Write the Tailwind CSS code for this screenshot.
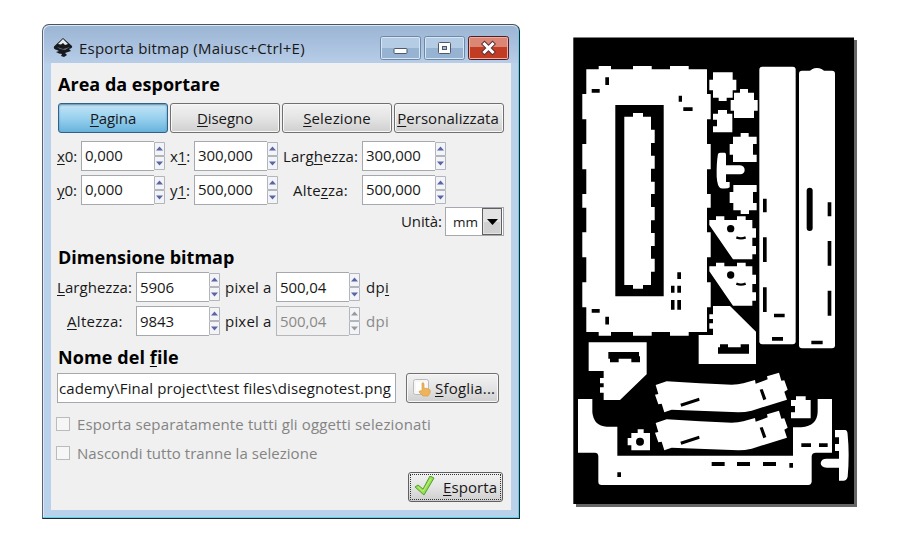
<!DOCTYPE html>
<html lang="it">
<head>
<meta charset="utf-8">
<title>Esporta bitmap</title>
<script src="https://cdn.jsdelivr.net/npm/@tailwindcss/browser@4"></script>
</head>
<body class="bg-white w-[900px] h-[550px] overflow-hidden">
<svg class="hidden">
  <symbol id="spin" viewBox="0 0 11 28"><path d="M.5.5h10v13H.5zM.5 14.5h10v13H.5z" fill="#f3f4f8" stroke="#b3b5bc"/><path d="M5.5 4.5L9 8.500H2zM2 19.500h7L5.500 23.500z" fill="currentColor"/></symbol>
</svg>
<main class="flex gap-[53px] pl-[42px] pt-6 items-start font-['Open_Sans','Noto_Sans',sans-serif] text-[15px] leading-5 tracking-[-0.1px] text-[#181818] whitespace-nowrap">
  <section class="w-[478px] h-[495px] rounded-t-[7px] border border-[#20272d] border-t-[#4c535c] border-l-[#5a6270] bg-[#b9d1ea] flex flex-col shadow-[inset_-1px_-1px_0_#55d5ec,inset_1px_1px_0_#dce8f5]">
    <header class="h-[37px] shrink-0 mx-px mt-px rounded-t-[6px] bg-linear-to-b from-[#9bb5d4] to-[#b7cde8] flex items-start pl-[9px]">
      <svg class="mt-[11px] w-5 h-[21px]" viewBox="0 0 20 21"><path d="M10 1L1 9.500Q0 12 4 13L6 14 3 15Q6 17 9 17L8 19 11 20 14 18 12 16 18 14 16 12Q20 11 19 9z" fill="#17191d"/><path d="M10 2L5 7 8 7.500 10 6 12 8 15 7z" fill="#e9edf2"/><path d="M4 10l6 2 7-2-5 3-5-1z" fill="#687482"/></svg>
      <h1 class="ml-[6px] mt-[12px] w-[301px] shrink-0 tracking-[0.22px]">Esporta bitmap (Maiusc+Ctrl+E)</h1>
      <div class="mt-[10px] flex gap-[3px]">
        <svg class="w-[41px] h-[24px]" viewBox="0 0 41 24"><rect x=".5" y=".5" width="40" height="23" rx="2" fill="#b5cce5" stroke="#6f87a6"/><path d="M2 12h37v10H2z" fill="#96b3d2"/><rect x="1.500" y="1.500" width="38" height="21" rx="1" fill="none" stroke="#d8e6f5"/><rect x="14" y="12.500" width="13" height="5" rx="1" fill="#fff" stroke="#4d5968"/></svg>
        <svg class="w-[41px] h-[24px]" viewBox="0 0 41 24"><rect x=".5" y=".5" width="40" height="23" rx="2" fill="#b5cce5" stroke="#6f87a6"/><path d="M2 12h37v10H2z" fill="#96b3d2"/><rect x="1.500" y="1.500" width="38" height="21" rx="1" fill="none" stroke="#d8e6f5"/><rect x="14.500" y="6.500" width="12" height="11" rx="1" fill="#fff" stroke="#4d5968"/><rect x="18.500" y="10.500" width="4" height="3" fill="#a7bed6" stroke="#4d5968"/></svg>
        <svg class="w-[41px] h-[24px]" viewBox="0 0 41 24"><rect x=".5" y=".5" width="40" height="23" rx="2" fill="#dc8676" stroke="#501d22"/><path d="M2 11h37v11H2z" fill="#c23c24"/><rect x="1.500" y="1.500" width="38" height="21" rx="1" fill="none" stroke="#edb0a5"/><path d="M16.500 8l8 8M24.500 8l-8 8" stroke="#5c3439" stroke-width="5" stroke-linecap="square"/><path d="M16.500 8l8 8M24.500 8l-8 8" stroke="#fff" stroke-width="3" stroke-linecap="square"/></svg>
      </div>
    </header>
    <div class="w-[460px] h-[447px] ml-[8px] bg-[#f0f0f0] pl-[6px] flex flex-col items-start">
      <h2 class="mt-[11px] h-[29px] text-[18px] font-bold text-black tracking-[0.02px] pl-px">Area da esportare</h2>
      <div class="flex ml-px gap-[2px] h-[30px] text-center leading-[29px]">
        <button class="w-[110px] rounded-[3px] border border-[#2c628b] bg-linear-to-b from-[#c4e5f6] via-[#98d1ef] to-[#68b3db] shadow-[inset_0_1px_2px_#5f8ba5]"><u class="underline-offset-2">P</u>agina</button>
        <button class="w-[110px] rounded-[3px] border border-[#707070] bg-linear-to-b from-[#f2f2f2] via-[#e4e4e4] to-[#cfcfcf] shadow-[inset_0_0_0_1px_#f8f8f8]"><u class="underline-offset-2">D</u>isegno</button>
        <button class="w-[110px] rounded-[3px] border border-[#707070] bg-linear-to-b from-[#f2f2f2] via-[#e4e4e4] to-[#cfcfcf] shadow-[inset_0_0_0_1px_#f8f8f8] tracking-[0.15px]"><u class="underline-offset-2">S</u>elezione</button>
        <button class="w-[110px] rounded-[3px] border border-[#707070] bg-linear-to-b from-[#f2f2f2] via-[#e4e4e4] to-[#cfcfcf] shadow-[inset_0_0_0_1px_#f8f8f8] pr-[2px] tracking-[0.05px]"><u class="underline-offset-2">P</u>ersonalizzata</button>
      </div>
      <div class="flex mt-[8px] h-[30px] items-center">
        <span class="w-6"><u class="underline-offset-2">x</u>0:</span>
        <span class="w-[73px] h-[30px] bg-white border border-r-0 border-[#a5a8ad] pl-[3px] leading-[27px]">0,000</span><svg class="w-[11px] h-7 text-[#5b64a4]"><use href="#spin"/></svg>
        <span class="ml-[5px] w-6">x<u class="underline-offset-2">1</u>:</span>
        <span class="w-[73px] h-[30px] bg-white border border-r-0 border-[#a5a8ad] pl-[3px] leading-[27px]">300,000</span><svg class="w-[11px] h-7 text-[#5b64a4]"><use href="#spin"/></svg>
        <span class="ml-[5px] w-[79px] tracking-[0.05px]">Larg<u class="underline-offset-2">h</u>ezza:</span>
        <span class="w-[73px] h-[30px] bg-white border border-r-0 border-[#a5a8ad] pl-[3px] leading-[27px]">300,000</span><svg class="w-[11px] h-7 text-[#5b64a4]"><use href="#spin"/></svg>
      </div>
      <div class="flex mt-1 h-[30px] items-center">
        <span class="w-6"><u class="underline-offset-2">y</u>0:</span>
        <span class="w-[73px] h-[30px] bg-white border border-r-0 border-[#a5a8ad] pl-[3px] leading-[27px]">0,000</span><svg class="w-[11px] h-7 text-[#5b64a4]"><use href="#spin"/></svg>
        <span class="ml-[5px] w-6">y<u class="underline-offset-2">1</u>:</span>
        <span class="w-[73px] h-[30px] bg-white border border-r-0 border-[#a5a8ad] pl-[3px] leading-[27px]">500,000</span><svg class="w-[11px] h-7 text-[#5b64a4]"><use href="#spin"/></svg>
        <span class="ml-[5px] w-[79px] pl-[10px] tracking-[0.2px]">Alte<u class="underline-offset-2">z</u>za:</span>
        <span class="w-[73px] h-[30px] bg-white border border-r-0 border-[#a5a8ad] pl-[3px] leading-[27px]">500,000</span><svg class="w-[11px] h-7 text-[#5b64a4]"><use href="#spin"/></svg>
      </div>
      <div class="flex mt-[2px] ml-[344px] h-[29px] items-center">
        <span class="w-[44px] pb-[2px]">Unità:</span>
        <span class="w-[59px] h-[29px] bg-white border border-[#a5a8ad] flex"><span class="w-[36px] pl-[7px] pt-[4px] text-[13.5px]">mm</span><svg class="w-[21px] h-[27px]" viewBox="0 0 21 27"><rect x=".5" y=".5" width="19" height="26" fill="#e3e3e3" stroke="#606060"/><path d="M2 14h16v11H2z" fill="#d0d0d0"/><path d="M5 11h11l-5.500 6z" fill="#000"/></svg></span>
      </div>
      <h2 class="mt-[11px] h-[25px] text-[18px] font-bold text-black tracking-[0px] pl-px">Dimensione bitmap</h2>
      <div class="flex h-[30px] items-center">
        <span class="w-[79px] tracking-[0.05px]"><u class="underline-offset-2">L</u>arghezza:</span>
        <span class="w-[73px] h-[30px] bg-white border border-r-0 border-[#a5a8ad] pl-[3px] leading-[28px]">5906</span><svg class="w-[11px] h-7 text-[#5b64a4]"><use href="#spin"/></svg>
        <span class="ml-[5px] w-[51px] tracking-[0.2px]">pixel a</span>
        <span class="w-[73px] h-[30px] bg-white border border-r-0 border-[#a5a8ad] pl-[3px] leading-[28px]">500,04</span><svg class="w-[11px] h-7 text-[#5b64a4]"><use href="#spin"/></svg>
        <span class="ml-[6px] tracking-[0.3px]">dp<u class="underline-offset-2">i</u></span>
      </div>
      <div class="flex mt-1 h-[30px] items-center">
        <span class="w-[79px] pl-[10px] tracking-[0.3px]"><u class="underline-offset-2">A</u>ltezza:</span>
        <span class="w-[73px] h-[30px] bg-white border border-r-0 border-[#a5a8ad] pl-[3px] leading-[28px]">9843</span><svg class="w-[11px] h-7 text-[#5b64a4]"><use href="#spin"/></svg>
        <span class="ml-[5px] w-[51px] tracking-[0.2px]">pixel a</span>
        <span class="w-[73px] h-[30px] border border-r-0 border-[#b5b7ba] text-[#8a8a8a] pl-[3px] leading-[28px]">500,04</span><svg class="w-[11px] h-7 text-[#999]"><use href="#spin"/></svg>
        <span class="ml-[6px] text-[#8a8a8a] tracking-[0.3px]">dpi</span>
      </div>
      <h2 class="mt-[11px] h-[26px] text-[18px] font-bold text-black tracking-[0.1px] pl-px">Nome del <u class="underline-offset-2">f</u>ile</h2>
      <div class="flex h-[30px]">
        <span class="w-[339px] h-[30px] bg-white border border-[#a5a8ad] pl-px leading-[29px] tracking-[0.11px] overflow-hidden">cademy\Final project\test files\disegnotest.png</span>
        <button class="ml-[10px] w-[93px] h-[30px] rounded-[3px] border border-[#707070] bg-linear-to-b from-[#f2f2f2] via-[#e4e4e4] to-[#cfcfcf] shadow-[inset_0_0_0_1px_#f8f8f8] flex items-center pl-[6px]">
          <svg class="w-[19px] h-[20px]" viewBox="0 0 19 20"><rect x=".5" y="1.500" width="15" height="15" rx="2" fill="#f6f6f4" stroke="#b9bbc0"/><path d="M3 4h10v9H3z" fill="#fff"/><path d="M9 5q2-1 2 1v4l5 1q2 1 1 4l-2 3h-5l-4-4q0-2 3-1z" fill="#eeb45a" stroke="#d99c4d" stroke-width=".7"/></svg>
          <span class="ml-[3px] tracking-[0.2px]"><u class="underline-offset-2">S</u>foglia...</span>
        </button>
      </div>
      <label class="mt-[11px] h-5 flex items-center text-[#848484] ml-[-1px] tracking-[0.14px]"><span class="w-[14px] h-[14px] mb-px mr-[7px] border border-[#b9bbbd] bg-[#f6f6f6]"></span>Esporta separatamente tutti gli oggetti selezionati</label>
      <label class="mt-[9px] h-5 flex items-center text-[#848484] ml-[-1px] tracking-[0.04px]"><span class="w-[14px] h-[14px] mb-px mr-[7px] border border-[#b9bbbd] bg-[#f6f6f6]"></span>Nascondi tutto tranne la selezione</label>
      <button class="ml-[351px] mt-[9px] w-[95px] h-[30px] rounded-[3px] border border-[#606060] bg-linear-to-b from-[#f2f2f2] via-[#e4e4e4] to-[#cfcfcf] p-px">
        <span class="h-full border border-dotted border-[#333] flex items-center pl-[4px]">
          <svg class="w-5 h-5 -mt-[3px]" viewBox="0 0 20 20"><path d="M0 11l3-2 5 4L15 0l4 2L9 19z" fill="#94df50" stroke="#57a02b"/><path d="M3 11l5 4.500L16 2.500" fill="none" stroke="#c2f184"/></svg>
          <span class="ml-[8px] tracking-[0.1px]"><u class="underline-offset-2">E</u>sporta</span>
        </span>
      </button>
    </div>
  </section>
  <svg class="w-[284px] h-[470px] mt-[13px]" viewBox="573 37 284 470" fill="#fff">
    <path d="M576 40h281v467H576z" fill="#666"/><path d="M573.300 37.500H854V504H573.300z" fill="#000"/>
    <!-- frame -->
    <path d="M586.300 69.300H598.700V66H611V69.300H633V66H651.700V69.300H670V66H688.700V69.300H707V94H710.700V119.300H707V144H710.700V169.300H707V194H710.700V207.700H707V232.300H710.700V257.300H707V282.300H710.700V307.300H707V332H688.700V335.700H670V332H651.700V335.700H633V332H611V335.700H598.700V332H586.300V307.300H582.300V282.300H586.300V257.300H582.300V232.300H586.300V207.700H582.300V194H586.300V169.300H582.300V144H586.300V119.300H582.300V94H586.300z"/>
    <path d="M615.300 105H663.700V296.300H615.300z" fill="#000"/>
    <path d="M624.300 116.700H633V113H643V116.700H651V129.700H654.700V143H651V155.700H654.700V168.700H651V181.700H654.700V194H651V207H654.700V220.300H651V233H654.700V246H651V258.700H654.700V271.700H651V285H643V288.700H633V285H624.300z"/>
    <path fill="#000" d="M605.300 77.300h3.700v7.700h-3.700zM591.700 89h8v3.700h-8zM678.700 95.700h3.300v6h-3.300zM683.300 107.300h9.300v3.700h-9.300zM677.300 272.300h3.700v6.700h-3.700zM671 285.700h3.500v7h-3.500zM677.300 285.700h3.700v7h-3.700zM671 300h3.500v9.700h-3.500zM677.300 300h3.700v9.700h-3.700zM591.700 309h8v3.700h-8zM605.300 316.700h3.700v7.700h-3.700z"/>
    <!-- connectors -->
    <g transform="translate(700 30) scale(.33333)">
      <path d="M39 127H98V149H109V181H98V203H80V213H56V203H39V181H28V149H39zM102 188H120V177H144V188H162V210H173V242H162V264H102V242H92V210H102zM39 251H54V240H81V251H97V307H39V289H51V269H39zM99 320H122V309H146V320H170V342H159V374H170V396H99V374H89V342H99z"/>
      <path d="M54 372Q56 368 62 368H74Q78 368 78 374V406H120Q134 408 134 420Q134 432 120 433H78V456H89V472Q84 477 62 475Q52 470 50 440Q49 400 54 372z"/>
    </g>
    <!-- rails and brackets -->
    <g transform="translate(700 185) scale(.33333)">
      <path d="M100 0H170V21H159V54H170V76H147V87H122V76H100V54H89V21H100z"/>
      <rect x="178" y="-355" width="109" height="833" rx="9"/><rect x="297" y="-343" width="108" height="833" rx="9"/><path d="M322 -340Q332 -341 336 -347Q350 -355 366 -347Q370 -341 380 -340z"/>
      <path fill="#000" d="M189 41h11v41h-11zM189 157h11v74h-11zM189 307h11v74h-11zM383 52h11v42h-11zM383 168h11v74h-11zM383 317h11v75h-11zM222 386h32v11h-32zM216 456h33v11h-33zM334 467h34v11h-34z"/><rect x="320" y="8" width="18" height="130" rx="9" fill="#000"/>
      <g id="bracket"><path d="M28 105H48V94H73V105H111V94H137V105H157V130H168V158H157V183H168V208H157V223H99L28 120z"/><circle cx="92" cy="131" r="11" fill="#000"/><path d="M109 157q14 6 28 0" fill="none" stroke="#000" stroke-width="7"/></g>
      <use href="#bracket" y="139"/>
      <path d="M39 363H90L168 440V537H-4V450H39V431H28V415H39V402H28V388H39z"/><path fill="#000" d="M60 478H84V487H122V478H147V506H54V487H60z"/>
    </g>
    <!-- base, arms and hook -->
    <g transform="translate(565 335) scale(.33333)">
      <path d="M71 22H245V118L165 195H116V173H105V157H116V145H105V129H116V108H71z"/><path fill="#000" d="M130 51H222V64H225V82H199V71H161V82H135V71H130z"/>
      <g id="arm"><path d="M272 150L305 139L405 144.500L500 149Q520 149 535 145L570 135L572 146L608 133L606 124L642 113L649 137L658 136L668 164L658 170L666 194L560 227Q540 232 520 232L320 224L298 232L290 206L280 208L270 179L280 177z"/><path fill="#000" d="M346 206L402 188L404 197L349 215zM584 164L593 162L604 192L595 196z"/></g>
      <use href="#arm" y="114"/>
      <path d="M39 192H82V232Q86 273 125 275H157V362H684V277H709Q757 272 758 230V192H801V353H753Q740 353 740 365V440Q738 450 730 450H110Q100 450 100 440V365Q100 353 90 353H39z"/>
      <path fill="#000" d="M157 412h11v14h-11zM440 381h39v12h-39zM516 381h39v12h-39zM594 381h39v12h-39zM673 384h11v14h-11zM709 325h29v11h-29zM762 325h26v11h-26z"/>
      <path d="M199 294H218V283H236V294H255V346H199V331H188V309H199z"/><circle cx="225" cy="320" r="12" fill="#000"/>
      <path d="M678 195H693V184H722V195H737V250H678V232H690V213H678z"/>
      <path d="M810 285H841Q848 287 848 300Q854 360 848 425Q845 437 835 437H822V398H785Q767 396 767 384Q769 371 785 371H822V348H810V327H822V307H810z"/>
    </g>
  </svg>
</main>
</body>
</html>
